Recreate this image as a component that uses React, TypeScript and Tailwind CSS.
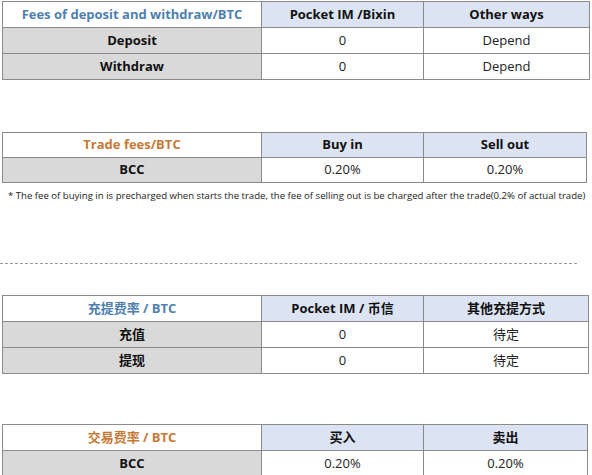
import React from "react";

type Row = { label: string; cells: string[] };

interface FeeTableProps {
    title: string;
    titleColor: string;
    heads: string[];
    rows: Row[];
    widths: number[];
    rowH: number;
}

const FeeTable: React.FC<FeeTableProps> = ({ title, titleColor, heads, rows, widths, rowH }) => {
    return (
        <table className="border-collapse table-fixed border border-[#8a8a8a]" style={{ width: widths.reduce((a, b) => a + b, 0) }}>
            <colgroup>
                {widths.map((w, i) => (
                    <col key={i} style={{ width: w }} />
                ))}
            </colgroup>
            <thead>
                <tr style={{ height: rowH }}>
                    <th className={`border border-[#8a8a8a] bg-white font-bold text-[13px] p-0 ${titleColor}`}>{title}</th>
                    {heads.map(h => (
                        <th key={h} className="border border-[#8a8a8a] bg-[#dce4f3] font-bold text-[13px] text-[#111] p-0">
                            {h}
                        </th>
                    ))}
                </tr>
            </thead>
            <tbody>
                {rows.map(r => (
                    <tr key={r.label} style={{ height: rowH }}>
                        <td className="border border-[#8a8a8a] bg-[#d9d9d9] font-bold text-[13px] text-[#111] text-center p-0">{r.label}</td>
                        {r.cells.map((c, i) => (
                            <td key={i} className="border border-[#8a8a8a] bg-white text-[13px] text-[#222] text-center p-0">
                                {c}
                            </td>
                        ))}
                    </tr>
                ))}
            </tbody>
        </table>
    );
};

export default function App() {
    return (
        <div
            className="w-[592px] h-[475px] overflow-hidden bg-white pl-[2px] pt-[1px]"
            style={{ fontFamily: '"Open Sans", "Noto Sans CJK SC", sans-serif' }}
        >
            <FeeTable
                title="Fees of deposit and withdraw/BTC"
                titleColor="text-[#4f7fae]"
                heads={["Pocket IM /Bixin", "Other ways"]}
                rows={[
                    { label: "Deposit", cells: ["0", "Depend"] },
                    { label: "Withdraw", cells: ["0", "Depend"] },
                ]}
                widths={[259, 162, 166]}
                rowH={26}
            />

            <div className="mt-[52px]">
                <FeeTable
                    title="Trade fees/BTC"
                    titleColor="text-[#c77a36]"
                    heads={["Buy in", "Sell out"]}
                    rows={[{ label: "BCC", cells: ["0.20%", "0.20%"] }]}
                    widths={[259, 162, 163]}
                    rowH={25}
                />
            </div>
            <p className="mt-[6px] pl-[6px] text-[9.6px] text-[#222] whitespace-nowrap">
                * The fee of buying in is precharged when starts the trade, the fee of selling out is be charged after the trade(0.2% of actual trade)
            </p>

            <div className="mt-[60px] -ml-[2px] w-[577px] border-t border-dashed border-[#9a9a9a]" />

            <div className="mt-[31px]">
                <FeeTable
                    title="充提费率 / BTC"
                    titleColor="text-[#4f7fae]"
                    heads={["Pocket IM / 币信", "其他充提方式"]}
                    rows={[
                        { label: "充值", cells: ["0", "待定"] },
                        { label: "提现", cells: ["0", "待定"] },
                    ]}
                    widths={[259, 162, 165]}
                    rowH={26}
                />
            </div>

            <div className="mt-[50px]">
                <FeeTable
                    title="交易费率 / BTC"
                    titleColor="text-[#c77a36]"
                    heads={["买入", "卖出"]}
                    rows={[{ label: "BCC", cells: ["0.20%", "0.20%"] }]}
                    widths={[259, 162, 164]}
                    rowH={26}
                />
            </div>
        </div>
    );
}
